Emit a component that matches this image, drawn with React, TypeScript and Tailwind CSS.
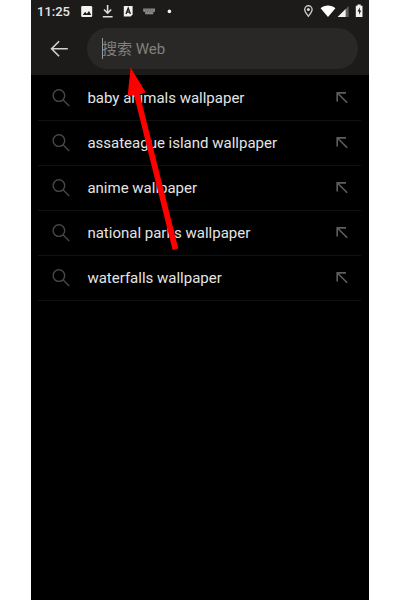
import { useState } from "react";

const suggestions = [
  "baby animals wallpaper",
  "assateague island wallpaper",
  "anime wallpaper",
  "national parks wallpaper",
  "waterfalls wallpaper",
];

function SearchIcon() {
  return (
    <svg viewBox="0 0 18 18" aria-hidden className="mb-px h-[18px] w-[18px] shrink-0" fill="none" stroke="#484848" strokeWidth="1.4">
      <circle cx="6.9" cy="6.6" r="5.8" />
      <path d="M11 10.8L17.2 17" />
    </svg>
  );
}

function FillArrowIcon() {
  return (
    <svg viewBox="0 0 12 12" aria-hidden className="h-3 w-3 shrink-0" fill="none" stroke="#5e5e5e" strokeWidth="1.6">
      <path d="M11.2 10.8L1.4 1M1.2 9.6V.9H10" />
    </svg>
  );
}

function BackIcon() {
  return (
    <svg viewBox="0 0 18 18" aria-hidden className="h-[18px] w-[18px]" fill="none" stroke="#d2d2d2" strokeWidth="1.6">
      <path d="M17.8 8.7H1.6M9.1 1.2L1.6 8.7l7.5 7.5" />
    </svg>
  );
}

function StatusBar() {
  return (
    <div className="flex h-6 items-center justify-between pr-[5px] pl-1.5">
      <div className="flex items-center">
        <span className="w-[44px] text-[13px] leading-6 font-medium whitespace-nowrap text-[#e6e6e6]">11:25</span>
        <svg viewBox="81 0 92 24" aria-hidden className="h-6 w-[92px]">
          <rect x="81.2" y="6" width="11" height="11" rx="1.3" fill="#f2f2f2" />
          <path d="M82.8 15l2.3-3.2 1.7 2 2.2-2.7 2.2 3.9z" fill="#1c1b1a" />
          <path d="M107.6 5v7.4M104 9.5l3.6 3.7 3.6-3.7M102.8 16.8h9.8" fill="none" stroke="#dcdcdc" strokeWidth="1.6" />
          <path d="M123.8 6h8.8v8.4l-2 2.1h-6.8z" fill="#f2f2f2" />
          <path d="M126 14l2.2-5.8 2.2 5.8M126.8 12.1h2.8" fill="none" stroke="#1c1b1a" strokeWidth="1.3" />
          <path d="M143.2 8.4h11.8v3l-1.7.8v2h-8.2v-2l-1.9-.8z" fill="#8a8a88" />
          <path d="M144.5 9.9h9.4M145.2 11.8h8" stroke="#484846" strokeWidth=".7" strokeDasharray="1 .8" />
          <circle cx="169.4" cy="11.4" r="1.8" fill="#f2f2f2" />
        </svg>
      </div>
      <svg viewBox="303 0 61 24" aria-hidden className="h-6 w-[61px]">
        <path d="M308.4 16.2c-1.8-2.3-3.7-4.4-3.7-6.7a3.7 3.7 0 0 1 7.4 0c0 2.3-1.9 4.4-3.7 6.7z" fill="none" stroke="#c8c8c8" strokeWidth="1.4" />
        <circle cx="308.4" cy="9.4" r="1.5" fill="#d8d8d8" />
        <path d="M320.6 8.2c4-3.7 10.8-3.7 14.8 0L328 17z" fill="#fff" />
        <path d="M348.6 6v11h-11z" fill="#5e5e5e" />
        <path d="M345.6 9v8h-8z" fill="#f2f2f2" />
        <path d="M355.8 5.8h1.7V4.4h3.2v1.4h1.8V17h-6.7z" fill="#f2f2f2" />
        <path d="M359.8 7.2l-2.2 4.4h1.5v3.2l2.1-4.3h-1.4z" fill="#1c1b1a" />
      </svg>
    </div>
  );
}

export default function App() {
  const [query, setQuery] = useState("");

  return (
    <div className="h-[600px] w-[400px] overflow-hidden bg-white font-['Roboto','Noto_Sans_CJK_SC',sans-serif]">
      <main className="relative ml-[31px] h-full w-[338px] bg-black">
        <header className="h-[75px] bg-[#1c1b1a]">
          <StatusBar />
          <div className="flex items-center pt-1 pl-[19px]">
            <button type="button" aria-label="返回" className="mr-[19px]">
              <BackIcon />
            </button>
            <label className="flex h-[41px] w-[271px] items-center rounded-full bg-[#292827] pl-[15px]">
              <span className="h-[21px] w-px bg-[#999]" />
              <input
                value={query}
                onChange={(e) => setQuery(e.target.value)}
                placeholder="搜索 Web"
                className="-ml-px w-[220px] bg-transparent pt-0.5 text-[15px] text-white outline-none placeholder:text-[#80807e]"
              />
            </label>
          </div>
        </header>

        <ul className="pt-px pr-2 pl-[7px]">
          {suggestions.map((item) => (
            <li key={item} className="flex h-[45px] items-center border-b border-[#111] pr-[13px] pl-3.5">
              <SearchIcon />
              <span className="ml-[17px] flex-1 pl-[0.4px] text-[15px] whitespace-nowrap text-[#e4e4e4]">{item}</span>
              <FillArrowIcon />
            </li>
          ))}
        </ul>

        {/* pointer to the search field */}
        <svg viewBox="125 65 56 188" aria-hidden className="pointer-events-none absolute top-[65px] left-[94px] h-[188px] w-14">
          <path d="M130.6 67.5L145.8 92.4 139.6 94 178.3 248.4 172.6 250 134 95 127.6 96.2z" fill="#fe0000" />
        </svg>
      </main>
    </div>
  );
}
